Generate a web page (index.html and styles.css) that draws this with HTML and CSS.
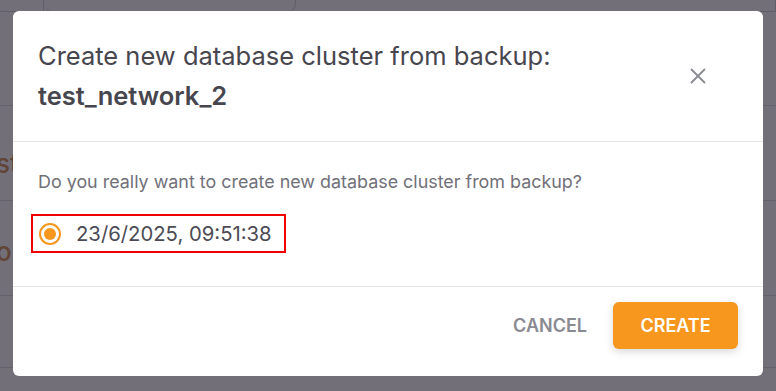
FILE: index.html
```html
<!DOCTYPE html>
<html>
<head>
<meta charset="utf-8">
<link rel="stylesheet" href="styles.css">
</head>
<body>
<div class="page">
  <div class="bg-row bg-top"><div class="bg-cell c1"></div><div class="bg-cell c2"></div><div class="bg-cell c3"></div></div>
  <div class="bg-line l1"></div>
  <div class="bg-line l2"></div>
  <div class="bg-line l3"></div>
  <div class="bg-line l4"></div>
  <div class="bg-text t1">st</div>
  <div class="bg-text t2">on</div>
</div>
<div class="overlay">
  <div class="dialog">
    <div class="dialog-header">
      <h2 class="title">Create new database cluster from backup:<br><strong>test_network_2</strong></h2>
      <button class="close" aria-label="Close">
        <svg width="16" height="16" viewBox="0 0 16 16"><path d="M1.5 1.5L14.5 14.5M14.5 1.5L1.5 14.5" stroke="#8a8a92" stroke-width="1.8" stroke-linecap="round" fill="none"/></svg>
      </button>
    </div>
    <div class="dialog-body">
      <p class="question">Do you really want to create new database cluster from backup?</p>
      <label class="option">
        <span class="radio"><span class="dot"></span></span>
        <span class="option-text">23/6/2025, 09:51:38</span>
      </label>
    </div>
    <div class="dialog-footer">
      <button class="btn-cancel">CANCEL</button>
      <button class="btn-create">CREATE</button>
    </div>
  </div>
</div>
</body>
</html>
```

FILE: styles.css
```css
* { box-sizing: border-box; }
html, body { margin: 0; padding: 0; }
body {
  width: 776px;
  height: 391px;
  overflow: hidden;
  font-family: Inter, "Noto Sans", sans-serif;
  background: #ffffff;
  position: relative;
}
.page {
  position: absolute;
  inset: 0;
}
.bg-row { display: flex; height: 12px; }
.bg-cell { border-right: 1px solid #c9c9cf; border-bottom: 1px solid #c9c9cf; }
.c1 { width: 44px; }
.c2 { width: 252px; border-radius: 0 0 8px 8px; }
.c3 { flex: 1; }
.bg-line {
  position: absolute;
  left: 0;
  right: 0;
  height: 1px;
  background: #d6d6da;
}
.l1 { top: 105px; }
.l2 { top: 200px; }
.l3 { top: 295px; }
.l4 { top: 367px; }
.bg-text {
  position: absolute;
  left: -4px;
  font-size: 26px;
  color: #c8752a;
  font-weight: 500;
}
.t1 { top: 148px; }
.t2 { top: 236px; }
.overlay {
  position: absolute;
  inset: 0;
  background: rgba(50, 46, 60, 0.69);
  display: flex;
  align-items: flex-start;
  justify-content: center;
  padding-top: 11px;
}
.dialog {
  width: 750px;
  height: 365px;
  background: #ffffff;
  border-radius: 6px;
  display: flex;
  flex-direction: column;
}
.dialog-header {
  display: flex;
  justify-content: space-between;
  align-items: flex-start;
  padding: 25px 25px 0 25px;
  height: 131px;
  border-bottom: 1px solid #e5e5e8;
}
.title {
  margin: 0;
  font-size: 25.5px;
  line-height: 40px;
  font-weight: 400;
  color: #47464f;
}
.title strong { font-weight: 600; }
.close {
  background: none;
  border: 0;
  padding: 0;
  margin: 32px 32px 0 0;
  width: 16px;
  height: 16px;
  display: flex;
}
.dialog-body {
  padding: 28px 25px 0 25px;
  height: 145px;
  border-bottom: 1px solid #e5e5e8;
}
.question {
  margin: 0;
  font-size: 17.9px;
  line-height: 24px;
  color: #717079;
}
.option {
  margin-top: 20px;
  margin-left: -7px;
  display: inline-flex;
  align-items: center;
  gap: 15px;
  border: 2px solid #f00000;
  padding: 0 12px 0 6px;
  height: 39px;
  width: 255px;
}
.radio {
  width: 22px;
  height: 22px;
  border-radius: 50%;
  border: 2px solid #f7971e;
  display: flex;
  align-items: center;
  justify-content: center;
}
.dot {
  width: 12px;
  height: 12px;
  border-radius: 50%;
  background: #f7971e;
}
.option-text {
  font-size: 20.3px;
  color: #4c4b55;
}
.dialog-footer {
  flex: 1;
  display: flex;
  justify-content: flex-end;
  align-items: flex-start;
  gap: 26px;
  padding: 15px 25px 0 0;
}
.btn-cancel {
  background: none;
  border: 0;
  font-family: inherit;
  font-size: 18px;
  font-weight: 600;
  color: #8a8a92;
  padding: 0;
  height: 47px;
}
.btn-create {
  background: #f7971e;
  border: 0;
  border-radius: 6px;
  width: 125px;
  height: 47px;
  font-family: inherit;
  font-size: 18px;
  font-weight: 600;
  color: #ffffff;
  box-shadow: 0 3px 8px rgba(0,0,0,0.15);
}
```
